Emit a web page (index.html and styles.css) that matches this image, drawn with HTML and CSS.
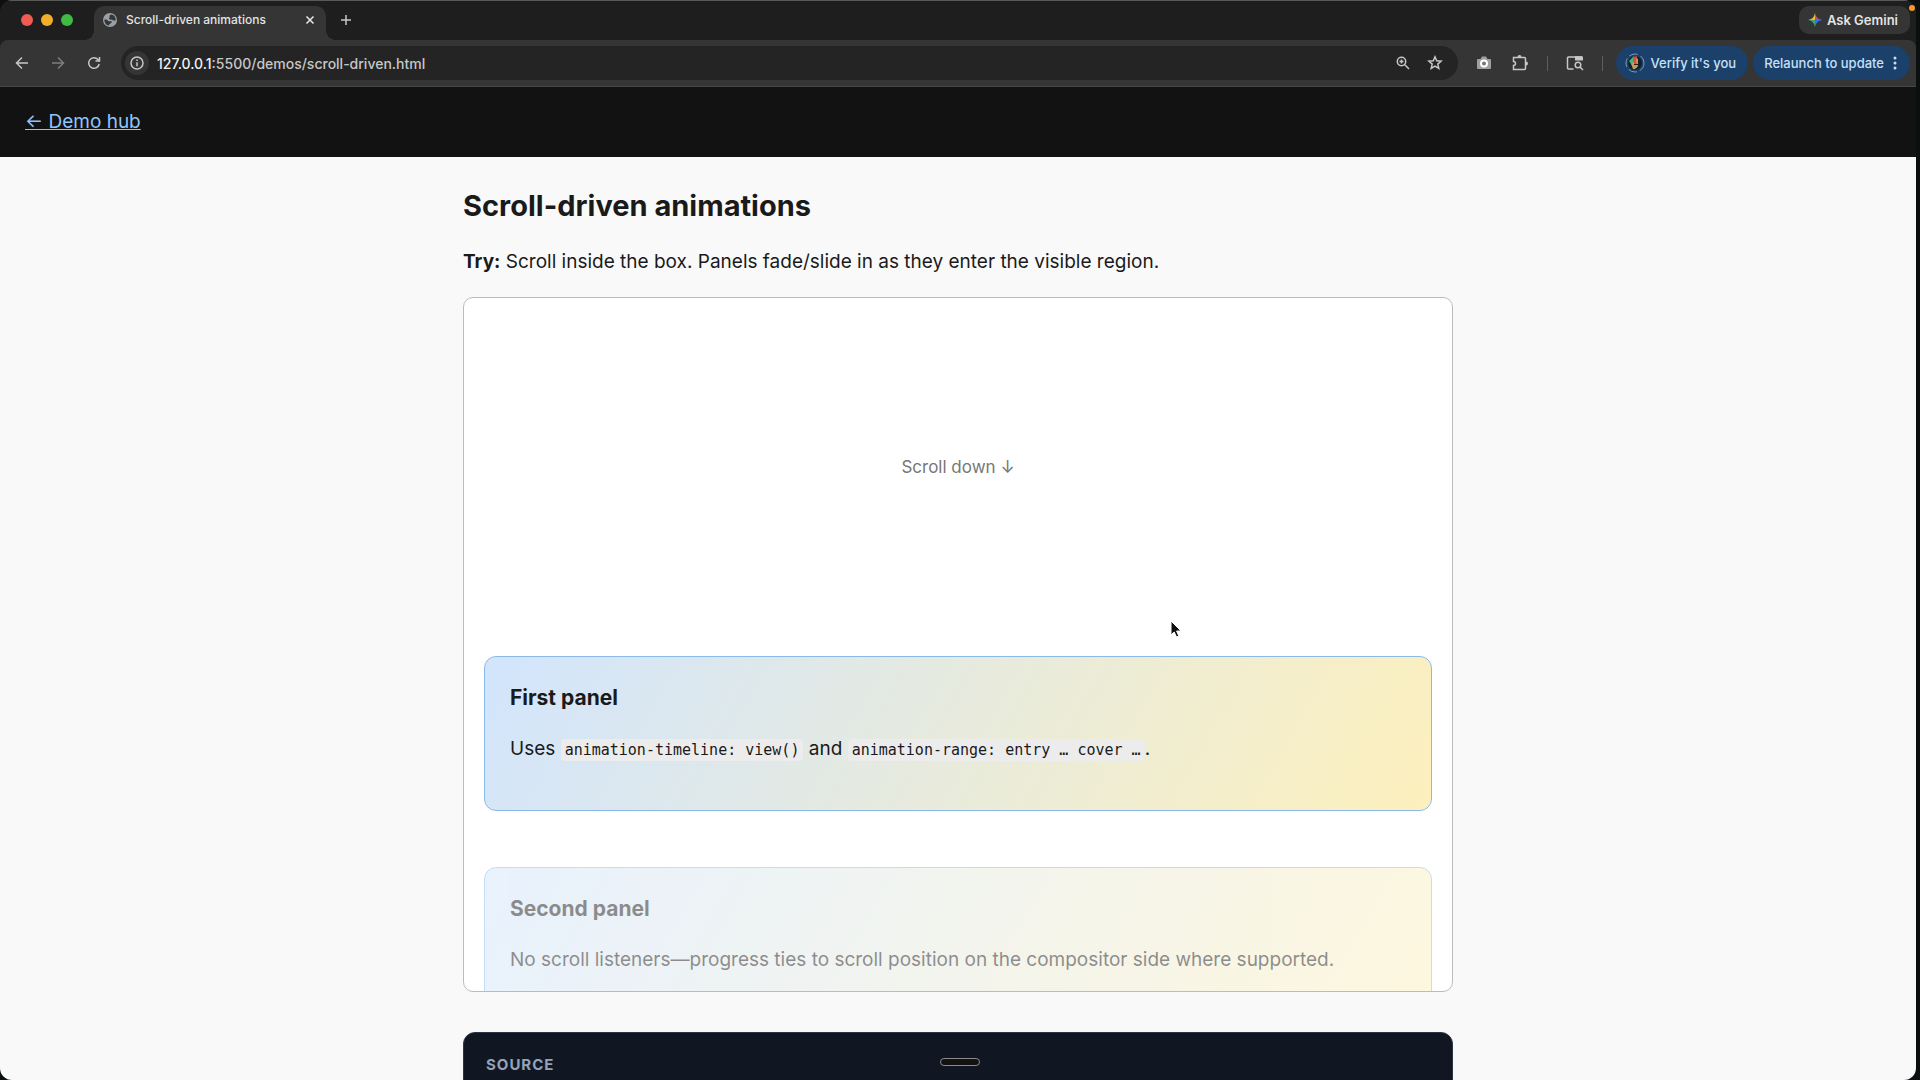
FILE: index.html
```html
<!DOCTYPE html>
<html lang="en">
<head>
  <meta charset="utf-8">
  <title>Scroll-driven animations</title>
  <link rel="stylesheet" href="styles.css">
</head>
<body>
  <div class="window">
    <div class="tabstrip">
      <div class="lights">
        <span class="light red"></span>
        <span class="light yellow"></span>
        <span class="light green"></span>
      </div>
      <div class="tab">
        <svg class="favicon" viewBox="0 0 16 16"><circle cx="8" cy="8" r="8" fill="#9aa0a6"/><path d="M1.500 7.500C3 7 5 7.500 5.500 8.500S7 9.500 9 9.500s1 2-.5 2.500-1 2-2.500 2.300C3 13.500 1.500 11 1.500 7.500zM10 1.800C8 2.300 7 3 7.500 4.300S6 6 7.500 7s2.500.2 3.500 1 2.500 1 3.500.2C14.500 5 13 2.800 10 1.800z" fill="#35363a"/></svg>
        <span class="tab-title">Scroll-driven animations</span>
        <button class="icon-button" aria-label="Close tab"><svg width="10" height="10" viewBox="0 0 10 10"><path d="M1.500 1.500l7 7M8.500 1.500l-7 7" class="line bright"/></svg></button>
      </div>
      <button class="icon-button new-tab" aria-label="New tab"><svg width="12" height="12" viewBox="0 0 12 12"><path d="M6 1v10M1 6h10" class="line"/></svg></button>
      <button class="gemini">
        <svg width="14" height="14" viewBox="0 0 14 14"><path d="M7 0Q6 6 0 7h7z" fill="#f2b632"/><path d="M7 0Q8 6 14 7H7z" fill="#e8514a"/><path d="M14 7Q8 8 7 14V5z" fill="#3f6cf0"/><path d="M0 7Q6 8 7 14V7z" fill="#38a86b"/></svg>
        Ask Gemini
      </button>
    </div>

    <div class="toolbar">
      <div class="nav">
        <button class="icon-button" aria-label="Back"><svg width="14" height="14" viewBox="0 0 14 14"><path d="M13 7H2M7 1.500L1.500 7 7 12.500" class="line"/></svg></button>
        <button class="icon-button dim" aria-label="Forward"><svg width="14" height="14" viewBox="0 0 14 14"><path d="M1 7h11M7 1.500L12.500 7 7 12.500" class="line"/></svg></button>
        <button class="icon-button" aria-label="Reload"><svg width="14" height="14" viewBox="0 0 14 14"><path d="M12.200 8A5.300 5.300 0 1 1 11 3.500L12.500 5M12.500 1v4h-4" class="line"/></svg></button>
      </div>
      <div class="address">
        <button class="site-info" aria-label="Site information"><svg width="14" height="14" viewBox="0 0 14 14"><circle cx="7" cy="7" r="6" class="line"/><path d="M7 6.300V10.300M7 3.600v1.500" class="line"/></svg></button>
        <div class="url"><span class="host">127.0.0.1</span>:5500/demos/scroll-driven.html</div>
        <button class="icon-button" aria-label="Zoom"><svg width="14" height="14" viewBox="0 0 14 14"><circle cx="5.500" cy="5.500" r="4.200" class="line"/><path d="M8.800 8.800L13 13M5.500 3.500v4M3.500 5.500h4" class="line"/></svg></button>
        <button class="icon-button" aria-label="Bookmark this tab"><svg width="16" height="16" viewBox="0 0 16 16"><path d="M8 1.800l1.700 4 4.400.4-3.300 2.900 1 4.300L8 11.100l-3.800 2.300 1-4.300L1.900 6.200l4.400-.4z" class="line"/></svg></button>
      </div>
      <button class="icon-button" aria-label="Screenshot"><svg width="16" height="16" viewBox="0 0 16 16"><path d="M2 4h2.500l1.500-2.500h4L11.500 4H14a1 1 0 0 1 1 1v8a1 1 0 0 1-1 1H2a1 1 0 0 1-1-1V5a1 1 0 0 1 1-1z" fill="#a0a0a0"/><circle cx="8" cy="8.500" r="3" fill="#777" stroke="#fff" stroke-width="2"/></svg></button>
      <button class="icon-button" aria-label="Extensions"><svg width="18" height="18" viewBox="0 0 18 18"><path d="M2.500 3.500H13.500a1 1 0 0 1 1 1V14.500a1 1 0 0 1-1 1H2.500V11.500a2 2 0 0 0 0-4z" class="line"/><path d="M6.500 3a2 2 0 0 1 4 0zM15 7.500a2 2 0 0 1 0 4z" fill="#c7c7c7"/></svg></button>
      <span class="divider"></span>
      <button class="icon-button" aria-label="Search tabs"><svg width="18" height="16" viewBox="0 0 18 16"><path d="M7.500 14H2.500a1 1 0 0 1-1-1V3a1 1 0 0 1 1-1H16" class="line"/><path d="M9 1.300h7a1 1 0 0 1 1 1V5.500H9z" fill="#c7c7c7"/><circle cx="12" cy="10" r="2.800" class="line"/><path d="M14 12l3 3" class="line"/></svg></button>
      <span class="divider last"></span>
      <button class="pill">
        <svg width="20" height="20" viewBox="0 0 20 20"><circle cx="10" cy="10" r="9" fill="none" stroke="#6f9fc4" stroke-width="1" stroke-dasharray="9 3"/><circle cx="10" cy="10" r="7" fill="#16202c"/><path d="M7 5q4-2 6 1v7q-2 4-5 3-1-3-2-5z" fill="#c99a5e"/><path d="M4 8l5-5v5l-3 3z" fill="#3dbb75"/><path d="M8 4l4-1-1 5 1 3-2 1-2-4z" fill="#d94f42"/><path d="M9 11h4v1H9z" fill="#2a1d18"/></svg>
        Verify it's you
      </button>
      <button class="pill relaunch">
        Relaunch to update
        <svg width="4" height="16" viewBox="0 0 4 16" fill="#c3e1fb"><circle cx="2" cy="3" r="1.500"/><circle cx="2" cy="8" r="1.500"/><circle cx="2" cy="13" r="1.500"/></svg>
      </button>
    </div>

    <div class="page">
      <header class="site-header"><a href="#">← Demo hub</a></header>
      <main>
        <h1>Scroll-driven animations</h1>
        <p class="intro"><strong>Try:</strong> Scroll inside the box. Panels fade/slide in as they enter the visible region.</p>
        <div class="scroller">
          <div class="spacer">Scroll down ↓</div>
          <section class="panel">
            <h2>First panel</h2>
            <p>Uses <code>animation-timeline: view()</code> and <code>animation-range: entry … cover …</code>.</p>
          </section>
          <section class="panel entering">
            <h2>Second panel</h2>
            <p>No scroll listeners—progress ties to scroll position on the compositor side where supported.</p>
          </section>
        </div>
        <section class="source">
          <h2>Source</h2>
        </section>
      </main>
    </div>
  </div>

  <span class="record-dot"></span>
  <span class="grabber"></span>
  <svg class="cursor" width="14" height="20" viewBox="0 0 14 20"><path d="M2 1v14l3.200-3 2.300 5 2.300-1-2.200-5H12z" fill="#111" stroke="#fff" stroke-width="1"/></svg>
</body>
</html>
```

FILE: styles.css
```css
* {
  box-sizing: border-box;
}

body {
  margin: 0;
  height: 100vh;
  overflow: hidden;
  padding-right: 4px;
  background: #0c0f10;
  font-family: Inter, "Liberation Sans", sans-serif;
  color: #1a1a1a;
}

button {
  font: inherit;
  color: inherit;
  border: none;
  background: none;
  padding: 0;
  cursor: pointer;
}

svg {
  display: block;
}

.line {
  fill: none;
  stroke: #c7c7c7;
  stroke-width: 1.5;
}

.bright {
  stroke: #e8e8e8;
}

.window {
  height: 100vh;
  display: flex;
  flex-direction: column;
  border-radius: 12px;
  overflow: hidden;
  background: #1e1e1e;
  color: #e3e3e3;
  font-size: 13px;
  font-weight: 500;
}

/* browser chrome */
.tabstrip {
  height: 40px;
  flex: none;
  display: flex;
  align-items: center;
  padding: 0 6px 1px 21px;
  border-top: 1px solid #585a5a;
}

.lights {
  display: flex;
  gap: 8px;
  margin-right: 21px;
}

.light {
  width: 12px;
  height: 12px;
  border-radius: 50%;
}

.red {
  background: #ee5c54;
}

.yellow {
  background: #f2ae2a;
}

.green {
  background: #3fba42;
}

.tab {
  position: relative;
  align-self: flex-end;
  width: 232px;
  height: 34px;
  display: flex;
  align-items: center;
  gap: 9px;
  padding: 0 11px 7px 9px;
  margin-bottom: -1px;
  border-radius: 10px 10px 0 0;
  background: #353535;
}

.tab::before,
.tab::after {
  content: "";
  position: absolute;
  bottom: 0;
  width: 10px;
  height: 10px;
}

.tab::before {
  right: 100%;
  background: radial-gradient(circle at 0 0, #1e1e1e 10px, #353535 10px);
}

.tab::after {
  left: 100%;
  background: radial-gradient(circle at 100% 0, #1e1e1e 10px, #353535 10px);
}

.favicon {
  width: 14px;
  height: 14px;
}

.tab-title {
  flex: 1;
  font-size: 12px;
}

.icon-button {
  display: flex;
  align-items: center;
  justify-content: center;
}

.new-tab {
  margin-left: 14px;
}

.gemini {
  height: 28px;
  margin-left: auto;
  display: flex;
  align-items: center;
  gap: 5px;
  padding: 0 12px 0 9px;
  border-radius: 10px;
  background: #353535;
  font-weight: 600;
}

.toolbar {
  height: 47px;
  flex: none;
  display: flex;
  align-items: center;
  padding: 0 6px 0 15px;
  border-radius: 8px 8px 0 0;
  border-bottom: 1px solid #464646;
  background: #353535;
}

.nav {
  display: flex;
  gap: 22px;
  margin-right: 20px;
}

.dim {
  opacity: 0.5;
}

.address {
  flex: 1;
  height: 34px;
  display: flex;
  align-items: center;
  gap: 17px;
  padding: 0 15px 0 4px;
  margin-right: 18px;
  border-radius: 17px;
  background: #242424;
}

.site-info {
  width: 24px;
  height: 24px;
  display: flex;
  align-items: center;
  justify-content: center;
  border-radius: 50%;
  background: #353535;
}

.url {
  flex: 1;
  margin-left: -9px;
  font-size: 14px;
  color: #c7c7c7;
}

.host {
  color: #f0f0f0;
}

.toolbar > .icon-button + .icon-button {
  margin-left: 19px;
}

.divider {
  width: 1px;
  height: 15px;
  margin: 0 18px;
  background: #5e5e5e;
}

.last {
  margin-right: 13px;
}

.pill {
  height: 34px;
  display: flex;
  align-items: center;
  gap: 6px;
  padding: 0 12px 0 9px;
  border-radius: 17px;
  background: #1b4069;
  color: #c3e1fb;
}

.relaunch {
  margin-left: 5px;
  gap: 9px;
  padding: 0 13px 0 11px;
}

/* demo page */
.page {
  flex: 1;
  min-height: 0;
  overflow: hidden;
  background: #f9f9f9;
  color: #1a1a1a;
  font-size: 19px;
  font-weight: 400;
  line-height: 30px;
}

.site-header {
  padding: 20px 25px;
  background: #121212;
}

.site-header a {
  color: #8ec5ff;
}

main {
  max-width: 1040px;
  margin: 0 auto;
  padding: 30px 25px;
}

h1 {
  margin: 0 0 22px;
  font-size: 29px;
  line-height: 38px;
}

.intro {
  margin: 0 0 20px;
}

.scroller {
  height: 695px;
  overflow: hidden;
  padding: 20px;
  border: 1px solid #bbb;
  border-radius: 10px;
  background: #fff;
}

.spacer {
  height: 298px;
  display: grid;
  place-items: center;
  margin-bottom: 40px;
  font-size: 17px;
  color: #777;
}

.panel {
  min-height: 155px;
  margin-bottom: 56px;
  padding: 25px;
  border: 1px solid #8abaea;
  border-radius: 12px;
  background: linear-gradient(120deg, #d2e5fd, #fdf0bd);
}

.entering {
  opacity: 0.5;
}

.panel h2 {
  margin: 0 0 20px;
  font-size: 21px;
  line-height: 32px;
}

.panel p {
  margin: 0;
}

code {
  padding: 2px 4px;
  border-radius: 4px;
  background: #ececec;
  font-family: "DejaVu Sans Mono", "Liberation Mono", monospace;
  font-size: 15px;
}

.source {
  height: 200px;
  margin-top: 40px;
  padding: 17px 22px;
  border: 1px solid #2a3646;
  border-radius: 12px;
  background: #111722;
}

.source h2 {
  margin: 0;
  font-size: 15px;
  font-weight: 700;
  letter-spacing: 1px;
  text-transform: uppercase;
  color: #94a3b8;
}

/* things floating over the window */
.record-dot {
  position: absolute;
  top: 5px;
  right: 5px;
  width: 6px;
  height: 6px;
  border-radius: 50%;
  background: #f39c2d;
}

.grabber {
  position: absolute;
  left: 50%;
  bottom: 14px;
  width: 40px;
  height: 8px;
  margin-left: -20px;
  border: 1px solid #8b8b8b;
  border-radius: 4px;
  background: #121212;
}

.cursor {
  position: absolute;
  left: 1169px;
  top: 620px;
}
```
